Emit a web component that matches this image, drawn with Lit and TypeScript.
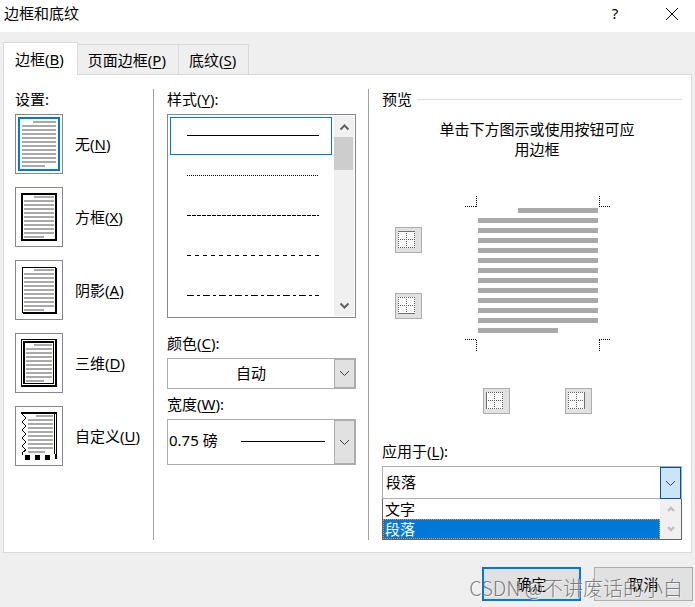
import { LitElement, html, css, svg } from "lit";
import { customElement, state } from "lit/decorators.js";

type Kind = "none" | "box" | "shadow" | "three" | "custom";

const SETTINGS: { kind: Kind; text: string; key: string }[] = [
  { kind: "none", text: "无", key: "N" },
  { kind: "box", text: "方框", key: "X" },
  { kind: "shadow", text: "阴影", key: "A" },
  { kind: "three", text: "三维", key: "D" },
  { kind: "custom", text: "自定义", key: "U" },
];

const DASHES = ["none", "1 1", "4 1", "4 4", "7 3 3 3"];

/* Grey text lines: the first is indented, the last is cut short. */
const textLines = (x: number, right: number, y: number, count: number, first: number, last: number, h = 2, pitch = 4) =>
  Array.from({ length: count }, (_, i) => {
    const x1 = i === 0 ? first : x;
    const x2 = i === count - 1 ? last : right;
    return svg`<rect x=${x1} y=${y + i * pitch} width=${x2 - x1} height=${h} fill="#a9a9a9"></rect>`;
  });

const thumbArt = (kind: Kind) => {
  switch (kind) {
    case "none":
      return svg`<rect x="4" y="4" width="40" height="52" fill="none" stroke="#0078d7" stroke-width="2"></rect>
        ${textLines(7, 41, 7, 12, 18, 30)}`;
    case "box":
      return svg`<rect x="7" y="7" width="34" height="46" fill="none" stroke="#000" stroke-width="2"></rect>
        ${textLines(9, 39, 9, 11, 19, 29)}`;
    case "shadow":
      return svg`<rect x="8" y="8" width="34" height="46" fill="#000"></rect>
        <rect x="7.5" y="7.5" width="33" height="45" fill="#fff" stroke="#000"></rect>
        ${textLines(9, 39, 9, 11, 19, 29)}`;
    case "three":
      return svg`<path d="M6 6h36v48H6zM7 7v45h33V7z" fill="#000" fill-rule="evenodd"></path>
        <path d="M8 8h31v43H8zM10 10v40h28V10z" fill="#000" fill-rule="evenodd"></path>
        ${textLines(11, 37, 11, 10, 19, 29)}`;
    default:
      return svg`<path d="M6 6h36v2H6zM39 8h1v40h-1zM41 8h1v40h-1zM40 48h2v5h-2z" fill="#000"></path>
        <path d="M7 8l4 4-4 4 4 4-4 4 4 4-4 4 4 4-4 4 4 4-4 3 1 2" fill="none" stroke="#000"></path>
        <path d="M10 49h5v5h-5zM20 49h5v5h-5zM30 49h5v5h-5z" fill="#000"></path>
        ${textLines(13, 38, 9, 10, 21, 30)}`;
  }
};

const chevron = html`<svg class="chev" width="11" height="7" viewBox="0 0 11 7" aria-hidden="true">
  <path d="M1 1l4.500 4.500L10 1" fill="none" stroke="#404040"></path>
</svg>`;

const scrollArrow = (up: boolean, small = false) => html`<svg
  width=${small ? 8 : 11} height=${small ? 6 : 8} viewBox="0 0 10 8" aria-hidden="true">
  <path d=${up ? "M1 6.500L5 2.500L9 6.500" : "M1 1.500L5 5.500L9 1.500"} fill="none"
    stroke=${small ? "#bfbfbf" : "#606060"} stroke-width=${small ? 3 : 2}></path>
</svg>`;

type Side = "top" | "bottom" | "left" | "right";
const EDGE: Record<Side, string> = {
  top: "M0 .5H17",
  bottom: "M0 16.500H17",
  left: "M.5 0V17",
  right: "M16.500 0V17",
};

@customElement("app-root")
export class AppRoot extends LitElement {
  @state() private setting: Kind = "none";
  @state() private line = 0;
  @state() private target = "段落";

  static styles = css`
    :host {
      display: flex;
      flex-direction: column;
      position: relative;
      min-height: 100vh;
      box-sizing: border-box;
      background: #efefef;
      color: #000;
      font: 15px/20px "Noto Sans", "Noto Sans CJK SC", sans-serif;
    }
    *, *::before { box-sizing: border-box; }
    button, select { font: inherit; color: inherit; margin: 0; border-radius: 0; }
    button { padding: 0; border: 0; background: none; }
    svg { display: block; flex: none; }
    u { text-decoration-thickness: 1px; text-underline-offset: 2px; }

    .title { display: flex; align-items: center; height: 32px; padding: 0 4px 4px; background: #fff; }
    .title h1 { flex: 1; margin: 0; padding-bottom: 2px; font: inherit; }
    .title button { display: grid; place-items: center; width: 38px; height: 28px; }
    .title .help { padding-bottom: 2px; }
    .title .close { margin-left: 19px; }

    .tabs { display: flex; align-items: flex-end; height: 43px; padding-left: 3px; }
    .tab { height: 31px; padding: 0 12px 0 10px; border: 1px solid #d9d9d9; border-left: 0; }
    .tab.on { height: 33px; padding: 0 13px 0 11px; border-left: 1px solid #d9d9d9; border-bottom: 0; background: #fff; }
    .rest { flex: 1; height: 1px; margin-right: 3px; background: #d9d9d9; }

    .panel {
      display: grid;
      grid-template-columns: 138px 215px 1fr;
      margin: 0 3px;
      padding: 14px 9px 12px 11px;
      border: 1px solid #d9d9d9;
      border-top: 0;
      background: #fff;
    }
    .col { padding-left: 13px; border-left: 1px solid #a0a0a0; min-width: 0; }
    .col.first { padding-left: 0; border-left: 0; }
    .label { display: block; height: 25px; }
    .settings { display: grid; gap: 13px; }
    .setting { display: flex; align-items: center; gap: 12px; text-align: left; white-space: nowrap; }
    .thumb { border: 1px solid #828790; background: #fff; }

    .lines { display: flex; width: 189px; height: 204px; padding: 1px 1px 1px 2px; border: 1px solid #828790; }
    .items { flex: 1; display: grid; gap: 2px; align-content: start; padding-top: 1px; overflow: hidden; }
    .item { display: grid; place-items: center; width: 162px; height: 38px; padding: 0 0 1px 4px; border: 1px solid transparent; }
    .item.on { border-color: #0078d7; }
    .scroll { display: flex; flex-direction: column; align-items: center; width: 20px; background: #f0f0f0; }
    .scroll .up, .scroll .down { display: grid; place-items: center; height: 21px; }
    .thumbbar { width: 19px; height: 33px; background: #cdcdcd; align-self: flex-start; }
    .scroll .down { margin-top: auto; }

    .field { display: grid; position: relative; width: 189px; height: 31px; }
    .field.tall { height: 46px; }
    .field select {
      appearance: none;
      width: 100%;
      height: 100%;
      padding: 0 22px 2px 1px;
      border: 1px solid #adadad;
      background: #fff;
      outline: 0;
    }
    .field.tall select { padding-bottom: 5px; }
    .field select.centered { text-align-last: center; }
    .drop {
      position: absolute;
      inset: 0 0 0 auto;
      display: grid;
      place-items: center;
      width: 22px;
      border: 1px solid #adadad;
      border-top-width: 2px;
      border-right-width: 2px;
      border-bottom-width: 2px;
      background: #e1e1e1;
      pointer-events: none;
    }
    .stroke { position: absolute; left: 74px; right: 31px; top: 22px; height: 1px; background: #000; pointer-events: none; }
    .gap { height: 15px; }
    .gap.small { height: 5px; }

    .group { display: flex; align-items: center; gap: 5px; height: 20px; }
    .group::after { content: ""; flex: 1; height: 1px; background: #dcdcdc; }
    .preview { display: grid; grid-template-columns: 27px 1fr; padding: 10px 30px 0 13px; }
    .sides { display: grid; gap: 40px; align-content: start; padding-top: 108px; }
    .stage { display: flex; flex-direction: column; align-items: center; }
    .hint { max-width: 200px; height: 77px; margin: 0; text-align: center; }
    .bottoms { display: flex; gap: 55px; margin-top: 37px; }
    .edge { display: flex; align-items: flex-start; width: 27px; height: 26px; padding: 3px 0 0 2px; border: 1px solid #adadad; background: #e1e1e1; }
    .apply { margin-top: 27px; }
    .field.wide { width: 100%; height: 33px; }
    .field.wide select { padding-left: 3px; }
    .field.wide .drop { inset: 1px 1px 0 auto; width: 21px; border: 1px solid #005499; background: #cce4f7; }
    .menu { display: flex; margin-top: -1px; border: 1px solid #646464; background: #fff; }
    .options { flex: 1; margin: 0; padding: 0; list-style: none; }
    .options li { height: 20px; padding-left: 2px; }
    .options li.on { outline: 1px dotted #ff8728; outline-offset: -1px; background: #0078d7; color: #fff; }
    .menu .scroll { justify-content: space-between; width: 21px; }
    .menu .up, .menu .down { height: 20px; }

    .actions { display: flex; justify-content: flex-end; gap: 13px; padding: 14px 2px 6px; }
    .action { width: 99px; height: 34px; border: 1px solid #adadad; background: #e1e1e1; }
    .action.main { border: 2px solid #0078d7; }
    .mark {
      position: absolute;
      right: 12px;
      bottom: 6px;
      font: 20px/26px "Noto Sans CJK SC", sans-serif;
      font-weight: 300;
      color: rgba(110, 110, 110, 0.9);
      text-shadow: 1px 1px 0 rgba(255, 255, 255, 0.6);
      white-space: nowrap;
      pointer-events: none;
    }
  `;

  private edge(side: Side, name: string) {
    return html`<button class="edge" aria-label=${name}>
      <svg width="17" height="17" viewBox="0 0 17 17" aria-hidden="true">
        <rect width="17" height="17" fill="#fff"></rect>
        <path d="M0 .5H17M0 8.500H17M0 16.500H17M.5 0V17M8.500 0V17M16.500 0V17" stroke="#606060" stroke-dasharray="1 1"></path>
        <path d=${EDGE[side]} stroke="#707070"></path>
      </svg>
    </button>`;
  }

  render() {
    return html`
      <header class="title">
        <h1>边框和底纹</h1>
        <button class="help" aria-label="帮助">?</button>
        <button class="close" aria-label="关闭">
          <svg width="12" height="12" viewBox="0 0 12 12"><path d="M0 0L12 12M12 0L0 12" stroke="#000"></path></svg>
        </button>
      </header>
      <nav class="tabs" role="tablist">
        <button class="tab on" role="tab" aria-selected="true">边框(<u>B</u>)</button>
        <button class="tab" role="tab" aria-selected="false">页面边框(<u>P</u>)</button>
        <button class="tab" role="tab" aria-selected="false">底纹(<u>S</u>)</button>
        <span class="rest"></span>
      </nav>
      <main class="panel">
        <section class="col first">
          <span class="label">设置:</span>
          <div class="settings">
            ${SETTINGS.map((s) => html`<button class="setting" aria-pressed=${this.setting === s.kind} @click=${() => (this.setting = s.kind)}>
              <svg class="thumb" width="48" height="60" viewBox="1 1 46 58" aria-hidden="true" shape-rendering="crispEdges">${thumbArt(s.kind)}</svg>
              <span>${s.text}(<u>${s.key}</u>)</span>
            </button>`)}
          </div>
        </section>

        <section class="col">
          <span class="label" id="style-label">样式(<u>Y</u>):</span>
          <div class="lines">
            <div class="items" role="listbox" aria-labelledby="style-label">
              ${DASHES.map((d, i) => html`<button class="item ${this.line === i ? "on" : ""}" role="option"
                aria-selected=${this.line === i} @click=${() => (this.line = i)}>
                <svg width="132" height="1" viewBox="0 0 132 1"><path d="M0 .5H132" stroke="#000" stroke-dasharray=${d}></path></svg>
              </button>`)}
            </div>
            <div class="scroll">
              <span class="up">${scrollArrow(true)}</span>
              <span class="thumbbar"></span>
              <span class="down">${scrollArrow(false)}</span>
            </div>
          </div>
          <div class="gap"></div>
          <label class="label" for="color">颜色(<u>C</u>):</label>
          <div class="field">
            <select id="color" class="centered"><option>自动</option></select>
            <span class="drop">${chevron}</span>
          </div>
          <div class="gap small"></div>
          <label class="label" for="width">宽度(<u>W</u>):</label>
          <div class="field tall">
            <select id="width"><option>0.75 磅</option></select>
            <span class="stroke"></span>
            <span class="drop">${chevron}</span>
          </div>
        </section>

        <section class="col">
          <div class="group">预览</div>
          <div class="preview">
            <div class="sides">
              ${this.edge("top", "上边框")} ${this.edge("bottom", "下边框")}
            </div>
            <div class="stage">
              <p class="hint">单击下方图示或使用按钮可应用边框</p>
              <svg width="145" height="155" viewBox="0 0 145 155" role="img" aria-label="预览">
                <path d="M11.500 0V11M0 10.500H11M134.500 0V11M134 10.500H145M0 143.500H11M11.500 144V155M134 143.500H145M134.500 144V155"
                  fill="none" stroke="#000" stroke-dasharray="1 1"></path>
                ${textLines(13, 133, 12, 13, 53, 93, 5, 10)}
              </svg>
              <div class="bottoms">
                ${this.edge("left", "左边框")} ${this.edge("right", "右边框")}
              </div>
            </div>
          </div>
          <div class="apply">
            <label class="label" for="apply">应用于(<u>L</u>):</label>
            <div class="field wide">
              <select id="apply" @change=${(e: Event) => (this.target = (e.target as HTMLSelectElement).value)}>
                <option .selected=${this.target === "文字"}>文字</option>
                <option .selected=${this.target === "段落"}>段落</option>
              </select>
              <span class="drop">${chevron}</span>
            </div>
            <div class="menu">
              <ul class="options" role="listbox" aria-label="应用于">
                ${["文字", "段落"].map((o) => html`<li class=${this.target === o ? "on" : ""} role="option"
                  aria-selected=${this.target === o} @click=${() => (this.target = o)}>${o}</li>`)}
              </ul>
              <div class="scroll">
                <span class="up">${scrollArrow(true, true)}</span>
                <span class="down">${scrollArrow(false, true)}</span>
              </div>
            </div>
          </div>
        </section>
      </main>
      <footer class="actions">
        <button class="action main">确定</button>
        <button class="action">取消</button>
      </footer>
      <span class="mark">CSDN @不讲废话的小白</span>
    `;
  }
}
